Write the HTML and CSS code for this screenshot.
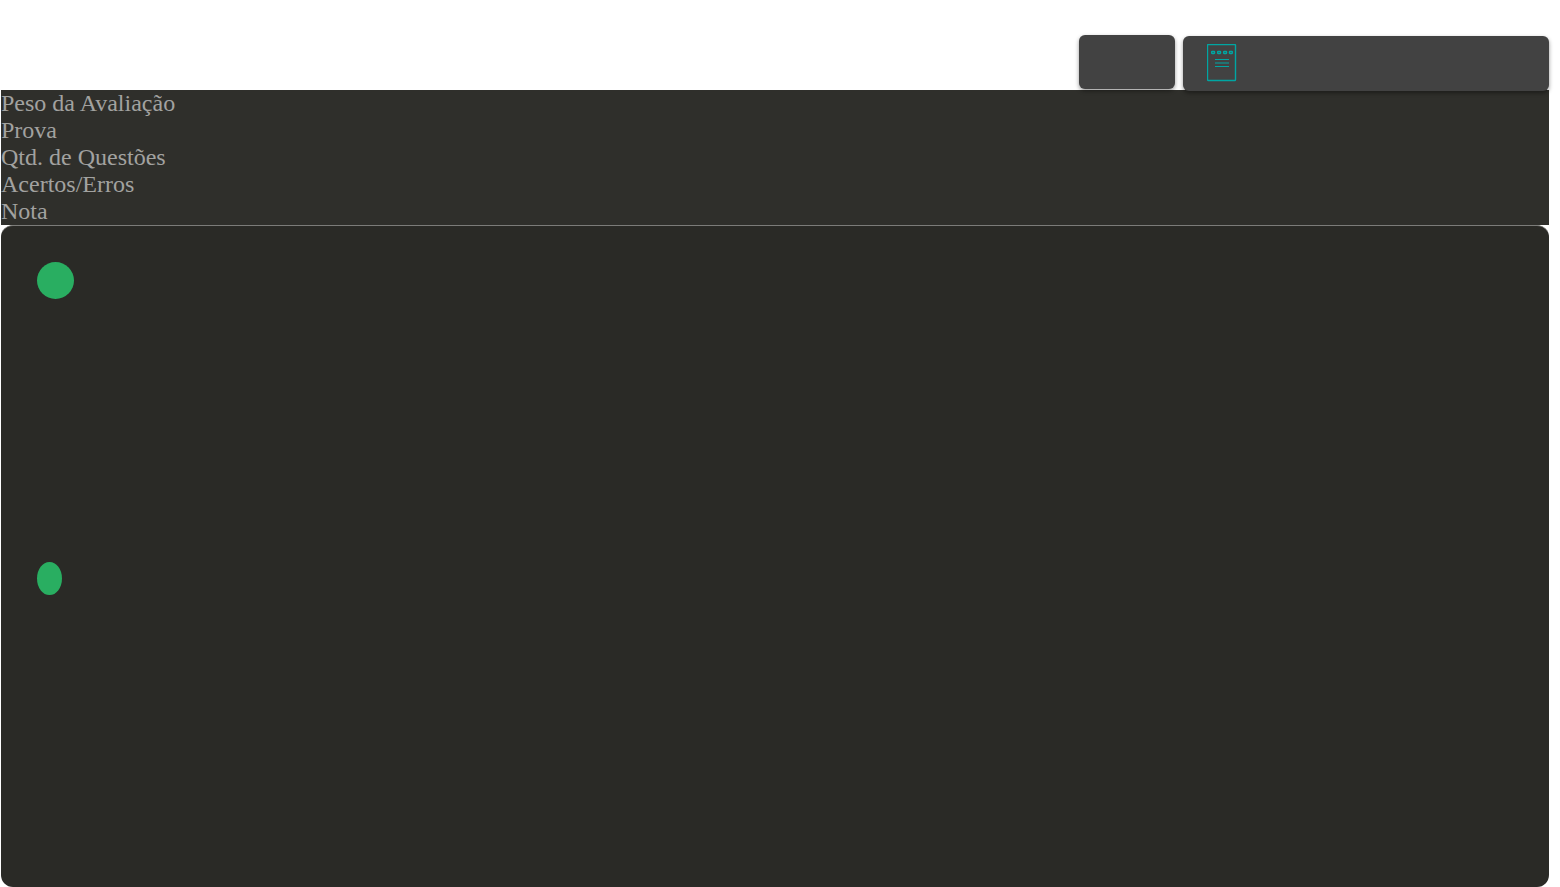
FILE: index.html
```html
<!DOCTYPE html>
<html lang="pt-BR">
<head>
<meta charset="utf-8">
<title>Avaliação</title>
<link rel="stylesheet" href="styles.css">
</head>
<body>
<main class="page">
  <div class="toolbar">
    <button class="action action-small" type="button" aria-label="Voltar"></button>
    <button class="action action-wide" type="button" aria-label="Prova">
      <svg class="sheet-icon" width="30" height="39" viewBox="0 0 30 39" fill="none" stroke="#00a6a3" aria-hidden="true">
        <rect x="0.5" y="0.5" width="28" height="36" rx="0.8" stroke-width="1.4"/>
        <path d="M8 15.500h14M8 19h14M8 22.500h14" stroke-width="1.2"/>
        <g stroke-width="1.3">
          <rect x="4.600" y="7.500" width="3" height="2" rx="0.5"/>
          <rect x="10.600" y="7.500" width="3" height="2" rx="0.5"/>
          <rect x="16.600" y="7.500" width="3" height="2" rx="0.5"/>
          <rect x="22.400" y="7.500" width="3" height="2" rx="0.5"/>
        </g>
      </svg>
    </button>
  </div>
  <ul class="columns">
    <li>Peso da Avaliação</li>
    <li>Prova</li>
    <li>Qtd. de Questões</li>
    <li>Acertos/Erros</li>
    <li>Nota</li>
  </ul>
  <section class="panel">
    <span class="dot dot-round"></span>
    <span class="dot dot-oval"></span>
  </section>
</main>
</body>
</html>
```
FILE: styles.css
```css
* {
  box-sizing: border-box;
}

body {
  margin: 0;
  background: #fff;
  font-family: "Liberation Serif", "Times New Roman", serif;
}

.page {
  display: flex;
  flex-direction: column;
  min-height: 100vh;
  padding: 0 11px 0 1px;
}

.toolbar {
  display: flex;
  justify-content: flex-end;
  align-items: flex-start;
  gap: 8px;
  height: 90px;
  padding-top: 35px;
}

.action {
  position: relative;
  display: flex;
  align-items: center;
  height: 54px;
  padding: 0 24px;
  border: 0;
  border-radius: 6px;
  background: #424242;
  box-shadow: 0 2px 4px rgba(0, 0, 0, 0.4);
}

.action-small {
  width: 96px;
}

.action-wide {
  width: 366px;
  height: 55px;
  margin-top: 1px;
}

.sheet-icon {
  display: block;
}

.columns {
  margin: 0;
  padding: 0;
  list-style: none;
  background: #2f2f2b;
  color: #a2a2a0;
  font-size: 24px;
  line-height: 27px;
}

.panel {
  display: flex;
  flex: 1;
  flex-direction: column;
  align-items: flex-start;
  gap: 263px;
  padding: 36px;
  border-top: 1px solid #7c7c79;
  border-radius: 12px;
  background: #2a2a26;
}

.dot {
  border-radius: 50%;
  background: #29ae61;
}

.dot-round {
  width: 37px;
  height: 37px;
}

.dot-oval {
  width: 25px;
  height: 33px;
}
```
